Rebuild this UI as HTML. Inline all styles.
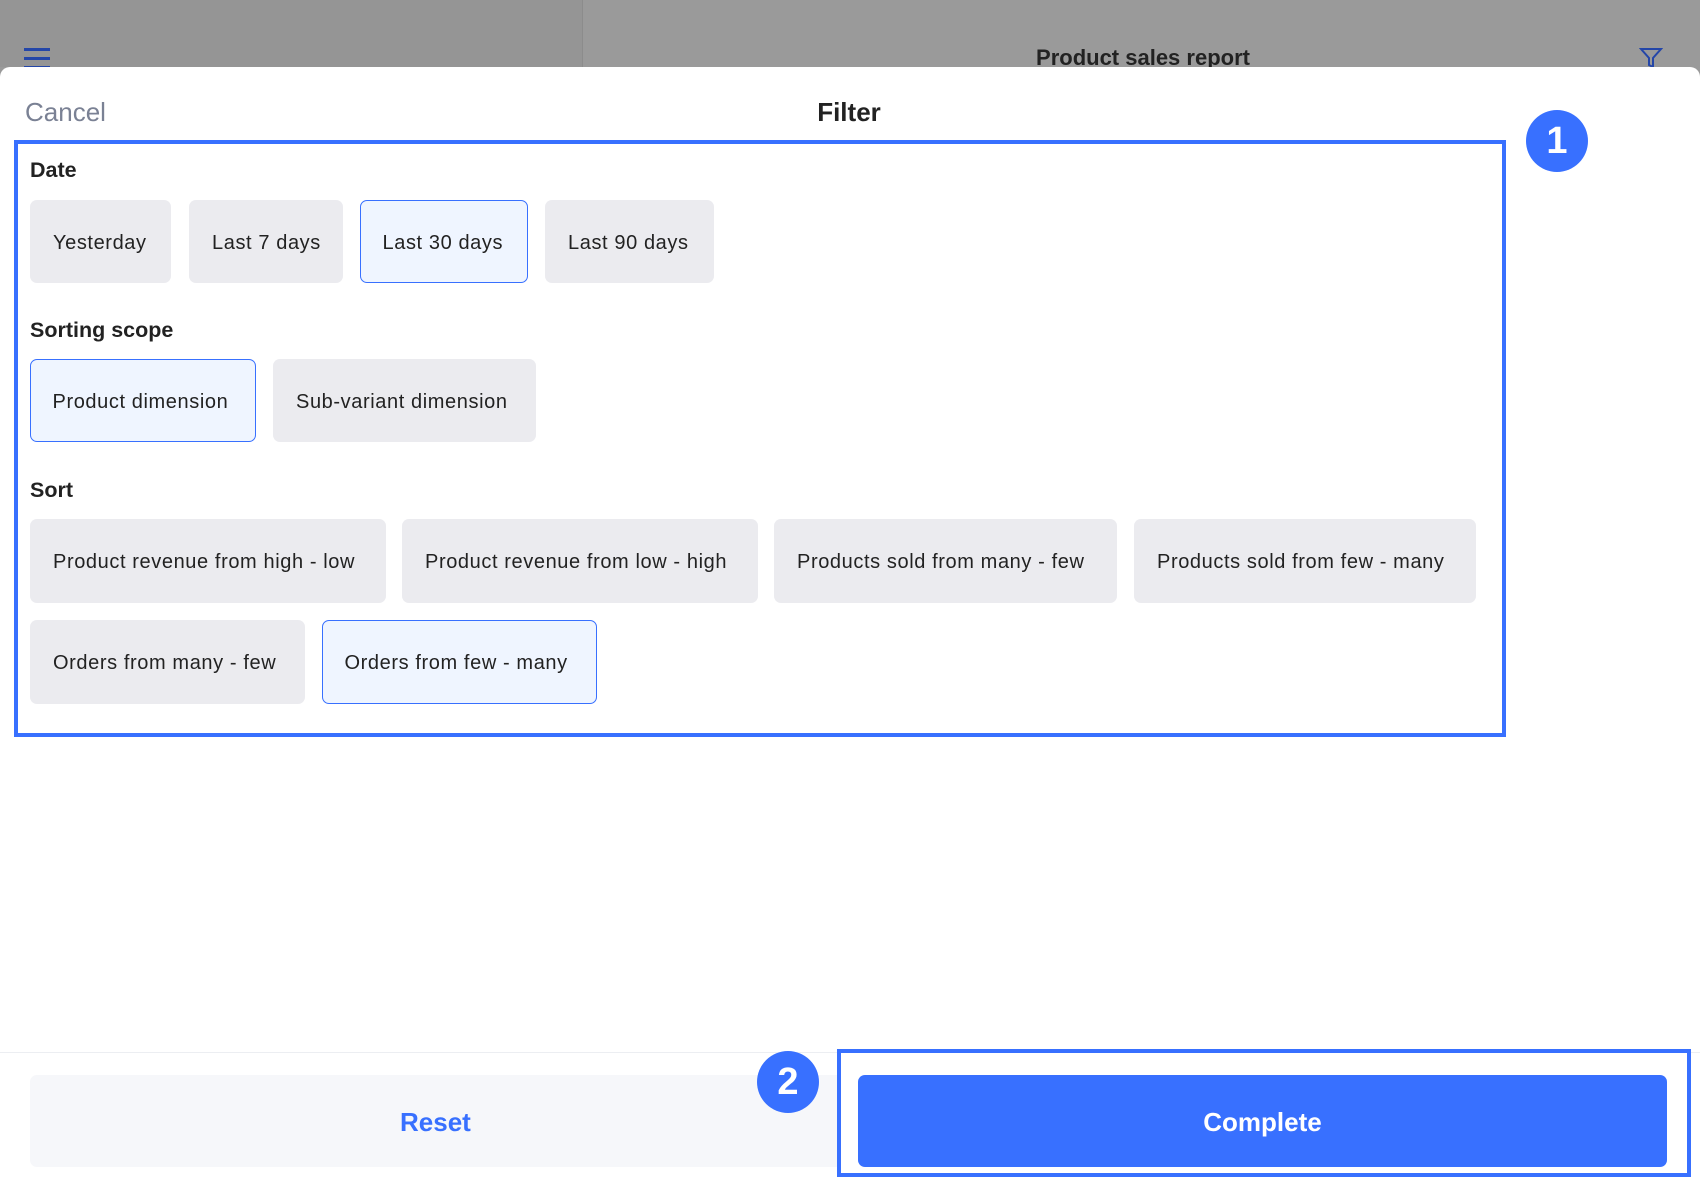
<!DOCTYPE html>
<html><head><meta charset="utf-8"><style>
*{margin:0;padding:0;box-sizing:border-box}
body{width:1700px;height:1181px;overflow:hidden;background:#9a9a9a;font-family:"Liberation Sans",sans-serif;position:relative}
.abs{position:absolute}
.btn{position:absolute;background:#ebebef;border-radius:7px;color:#222;font-size:20px;letter-spacing:0.6px;display:flex;align-items:center;justify-content:flex-start;padding-left:23px;padding-top:3px;white-space:nowrap}
.sel{background:#eff5ff;border:1.5px solid #3870ff;padding-left:21.5px}
.lbl{position:absolute;left:30px;font-size:21.5px;font-weight:bold;color:#222}
.badge{position:absolute;width:62px;height:62px;border-radius:50%;background:#3870ff;color:#fff;font-size:38px;font-weight:bold;display:flex;align-items:center;justify-content:center}
</style></head><body>
<div class="abs" style="left:0;top:0;width:582px;height:67px;background:#959595"></div>
<div class="abs" style="left:582px;top:0;width:1px;height:67px;background:#8c8c8c"></div>
<div class="abs" style="left:24px;top:48px;width:26px;height:3px;background:#2446a8"></div>
<div class="abs" style="left:24px;top:57px;width:26px;height:3px;background:#2446a8"></div>
<div class="abs" style="left:24px;top:66px;width:26px;height:3px;background:#2446a8"></div>
<div class="abs" style="left:1000px;top:45px;width:286px;text-align:center;font-size:22px;font-weight:bold;color:#222">Product sales report</div>
<svg class="abs" style="left:1639px;top:47px" width="24" height="22" viewBox="0 0 24 22"><path d="M2 2h20l-8 9v9l-4-2v-7z" fill="none" stroke="#2446a8" stroke-width="2"/></svg>
<div class="abs" style="left:0;top:67px;width:1700px;height:1114px;background:#fff;border-radius:10px 10px 0 0"></div>
<div class="abs" style="left:25px;top:97px;font-size:26px;color:#7a8194">Cancel</div>
<div class="abs" style="left:749px;top:97px;width:200px;text-align:center;font-size:26px;font-weight:bold;color:#222">Filter</div>
<div class="abs" style="left:14px;top:140px;width:1492px;height:597px;border:4.5px solid #3870ff"></div>
<div class="badge" style="left:1526px;top:110px">1</div>
<div class="lbl" style="top:158px">Date</div>
<div class="btn" style="left:30px;top:200px;width:141px;height:83px">Yesterday</div>
<div class="btn" style="left:189px;top:200px;width:154px;height:83px">Last 7 days</div>
<div class="btn sel" style="left:360px;top:200px;width:168px;height:83px">Last 30 days</div>
<div class="btn" style="left:545px;top:200px;width:169px;height:83px">Last 90 days</div>
<div class="lbl" style="top:318px">Sorting scope</div>
<div class="btn sel" style="left:30px;top:359px;width:226px;height:83px">Product dimension</div>
<div class="btn" style="left:273px;top:359px;width:263px;height:83px">Sub-variant dimension</div>
<div class="lbl" style="top:478px">Sort</div>
<div class="btn" style="left:30px;top:519px;width:356px;height:84px">Product revenue from high - low</div>
<div class="btn" style="left:402px;top:519px;width:356px;height:84px">Product revenue from low - high</div>
<div class="btn" style="left:774px;top:519px;width:343px;height:84px">Products sold from many - few</div>
<div class="btn" style="left:1134px;top:519px;width:342px;height:84px">Products sold from few - many</div>
<div class="btn" style="left:30px;top:620px;width:275px;height:84px">Orders from many - few</div>
<div class="btn sel" style="left:322px;top:620px;width:275px;height:84px">Orders from few - many</div>
<div class="abs" style="left:0;top:1052px;width:1700px;height:1px;background:#eceef2"></div>
<div class="btn" style="left:30px;top:1075px;width:820px;height:92px;background:#f6f7fa;color:#3870ff;font-size:26px;font-weight:bold;letter-spacing:0;padding-left:370px">Reset</div>
<div class="abs" style="left:837px;top:1049px;width:854px;height:128px;border:4.5px solid #3870ff;background:#fff"></div>
<div class="btn" style="left:858px;top:1075px;width:809px;height:92px;background:#3870ff;color:#fff;font-size:26px;font-weight:bold;letter-spacing:0;justify-content:center;padding-left:0">Complete</div>
<div class="badge" style="left:757px;top:1051px">2</div>
</body></html>
